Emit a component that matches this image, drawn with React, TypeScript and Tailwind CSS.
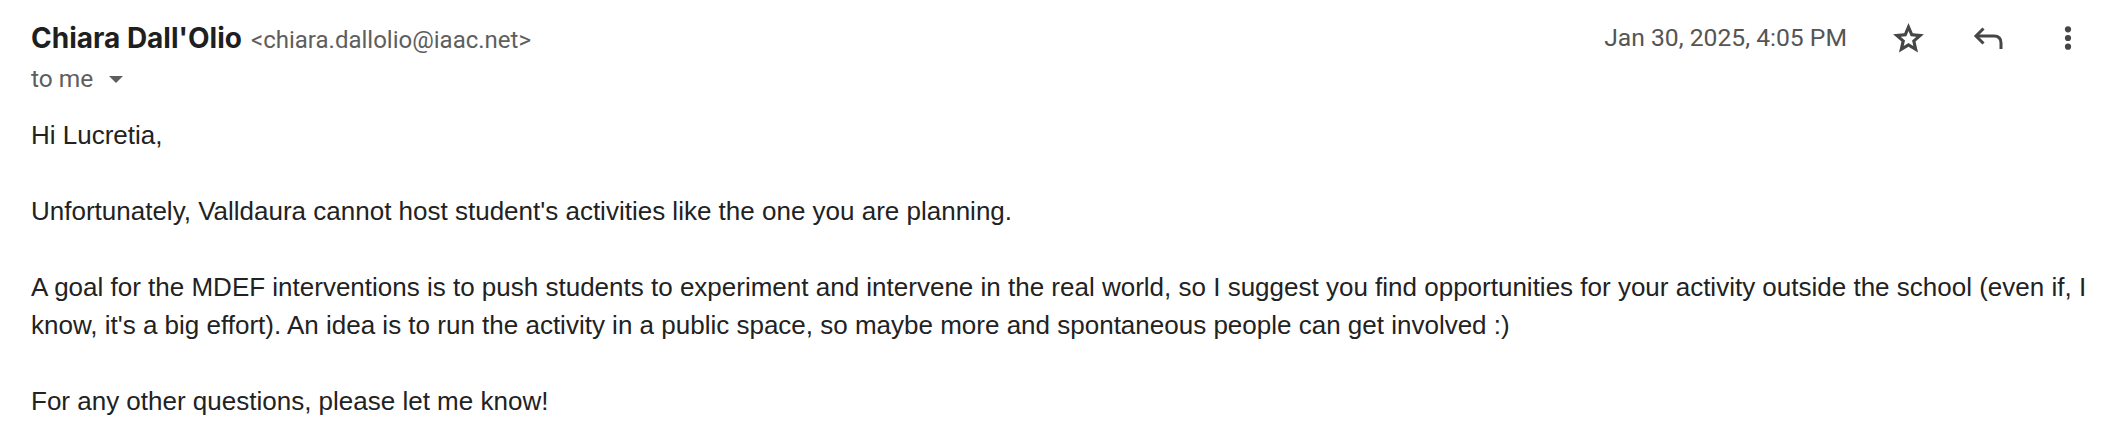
import React from "react";

const body = "font-['Liberation_Sans',Arial,sans-serif] text-[26px] leading-[38px] text-[#222222]";

function StarIcon() {
  return (
    <svg width="37" height="37" viewBox="0 -960 960 960" fill="#444746">
      <path d="m354-287 126-76 126 77-33-144 111-96-146-13-57-136-57 135-146 13 111 97-33 143ZM233-120l65-281L80-590l288-25 112-265 112 265 288 25-218 189 65 281-247-149-247 149Z" />
    </svg>
  );
}

function ReplyIcon() {
  return (
    <svg width="40" height="40" viewBox="0 0 40 40" fill="none" stroke="#444746" strokeWidth="3">
      <path d="M14.5 10.5 L7 18 L14.5 25.5" strokeLinejoin="miter" />
      <path d="M7 18 H25 Q32 18 32 25 V31" />
    </svg>
  );
}

function MoreIcon() {
  return (
    <svg width="40" height="40" viewBox="0 0 40 40" fill="#444746">
      <circle cx="20" cy="11.3" r="3.1" />
      <circle cx="20" cy="20" r="3.1" />
      <circle cx="20" cy="28.7" r="3.1" />
    </svg>
  );
}

export default function App() {
  return (
    <div className="w-[2102px] h-[444px] bg-white overflow-hidden">
      <div className="flex justify-between items-start pl-[31px] pr-[14px] pt-[20px]">
        <div className="flex flex-col">
          <div className="flex items-baseline gap-[9px] leading-[36px]">
            <span className="font-['Inter',Roboto,sans-serif] font-bold text-[28px] text-[#1f1f1f]">
              Chiara Dall'Olio
            </span>
            <span className="font-['Roboto',sans-serif] text-[24px] text-[#5e5e5e]">&lt;chiara.dallolio@iaac.net&gt;</span>
          </div>
          <div className="flex items-center gap-[16px] mt-[3px] h-[36px] font-['Roboto',sans-serif] text-[24.5px] text-[#5e5e5e]">
            <span>to me</span>
            <svg width="14" height="7" viewBox="0 0 14 7" fill="#5e5e5e">
              <path d="M0 0 H14 L7 7 Z" />
            </svg>
          </div>
        </div>
        <div className="flex items-center h-[40px] -mt-[2px]">
          <span className="font-['Roboto',sans-serif] text-[24.7px] text-[#555555] mr-[41px]">Jan 30, 2025, 4:05 PM</span>
          <div className="w-[40px] h-[40px] flex items-center justify-center">
            <StarIcon />
          </div>
          <div className="w-[40px] h-[40px] ml-[41px] flex items-center justify-center">
            <ReplyIcon />
          </div>
          <div className="w-[40px] h-[40px] ml-[39px] flex items-center justify-center">
            <MoreIcon />
          </div>
        </div>
      </div>
      <div className={`${body} pl-[31px] pr-[14px] mt-[19px]`}>
        <div>Hi Lucretia,</div>
        <div className="h-[38px]" />
        <div>Unfortunately, Valldaura cannot host student's activities like the one you are planning.</div>
        <div className="h-[38px]" />
        <div>
          A goal for the MDEF interventions is to push students to experiment and intervene in the real world, so I suggest you find opportunities for your activity outside the school (even if, I know, it's a big effort). An idea is to run the activity in a public space, so maybe more and spontaneous people can get involved :)
        </div>
        <div className="h-[38px]" />
        <div>For any other questions, please let me know!</div>
      </div>
    </div>
  );
}
